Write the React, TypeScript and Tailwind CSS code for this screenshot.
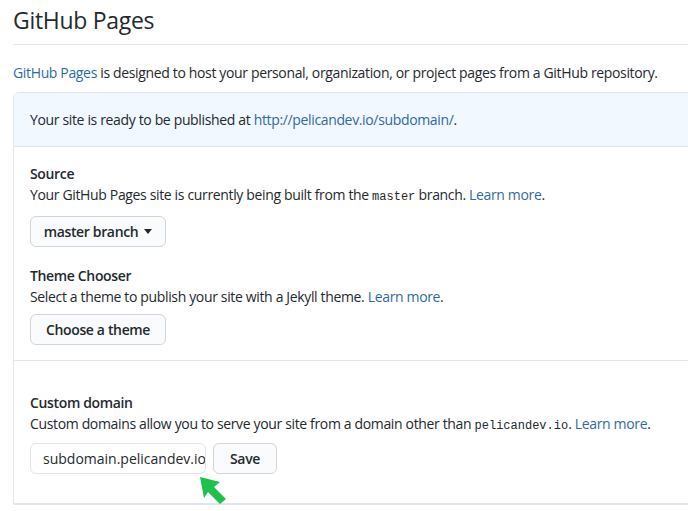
import React from "react";

const link = "text-[#2f6aa3]";
const mono = "font-['Liberation_Mono',monospace] text-[12px] tracking-normal";

function Section({
    title,
    children,
    className = "",
}: {
    title: string;
    children: React.ReactNode;
    className?: string;
}) {
    return (
        <div className={className}>
            <h3 className="text-[14px] leading-[21px] font-semibold">{title}</h3>
            {children}
        </div>
    );
}

export default function App() {
    return (
        <div className="w-[688px] h-[511px] overflow-hidden bg-white text-[#24292e] font-['Open_Sans','Noto_Sans',sans-serif] tracking-[-0.35px] relative">
            <div className="w-[760px] pl-[13px]">
                <h2 className="text-[23px] leading-[30px] pt-[5px] pb-[9px] border-b border-[#e1e4e8] tracking-[-0.3px]">
                    GitHub Pages
                </h2>
                <p className="text-[14px] leading-[21px] mt-[17px]">
                    <a className={link}>GitHub Pages</a> is designed to host your personal,
                    organization, or project pages from a GitHub repository.
                </p>

                <div className="mt-[9px] border border-[#e1e4e8] rounded-tl-[6px]">
                    <div className="bg-[#f1f8ff] border-b border-[#dde4ec] rounded-tl-[6px] px-4 pt-[16px] pb-[16px] text-[14px] leading-[21px]">
                        Your site is ready to be published at{" "}
                        <a className={link}>http://pelicandev.io/subdomain/</a>.
                    </div>

                    <div className="px-4 pt-[16px] pb-[15px] border-b border-[#e1e4e8]">
                        <Section title="Source">
                            <p className="text-[14px] leading-[21px]">
                                Your GitHub Pages site is currently being built from the{" "}
                                <code className={mono}>master</code> branch.{" "}
                                <a className={link}>Learn more</a>.
                            </p>
                            <button className="mt-[8px] h-[31px] w-[136px] flex items-center justify-center gap-[6px] rounded-[6px] border border-[#d1d5da] bg-[#fafbfc] text-[14px] font-semibold">
                                master branch
                                <svg width="8" height="5" viewBox="0 0 8 5">
                                    <path d="M0 0h8L4 5z" fill="#24292e" />
                                </svg>
                            </button>
                        </Section>

                        <Section title="Theme Chooser" className="mt-[18px]">
                            <p className="text-[14px] leading-[21px]">
                                Select a theme to publish your site with a Jekyll theme.{" "}
                                <a className={link}>Learn more</a>.
                            </p>
                            <button className="mt-[7px] h-[31px] w-[136px] flex items-center justify-center rounded-[6px] border border-[#d1d5da] bg-[#fafbfc] text-[14px] font-semibold">
                                Choose a theme
                            </button>
                        </Section>
                    </div>

                    <div className="px-4 pt-[31px] pb-[29px] border-b border-[#e1e4e8]">
                        <Section title="Custom domain">
                            <p className="text-[14px] leading-[21px]">
                                Custom domains allow you to serve your site from a domain other than{" "}
                                <code className={mono}>pelicandev.io</code>.{" "}
                                <a className={link}>Learn more</a>.
                            </p>
                            <div className="mt-[6px] flex gap-[7px]">
                                <div className="h-[31px] w-[176px] flex items-center pl-[12px] rounded-[6px] border border-[#e1e4e8] bg-white text-[14px] tracking-normal overflow-hidden whitespace-nowrap">
                                    subdomain.pelicandev.io
                                </div>
                                <button className="h-[31px] w-[64px] rounded-[6px] border border-[#d1d5da] bg-[#fafbfc] text-[14px] font-semibold">
                                    Save
                                </button>
                            </div>
                        </Section>
                    </div>
                </div>
            </div>

            <svg
                className="absolute left-[196px] top-[475px]"
                width="32"
                height="30"
                viewBox="0 0 32 30"
            >
                <path d="M4 2 L24 7 L18 12 L30 24 L24 29 L12 17 L8 23 Z" fill="#1ec14a" />
            </svg>
        </div>
    );
}
